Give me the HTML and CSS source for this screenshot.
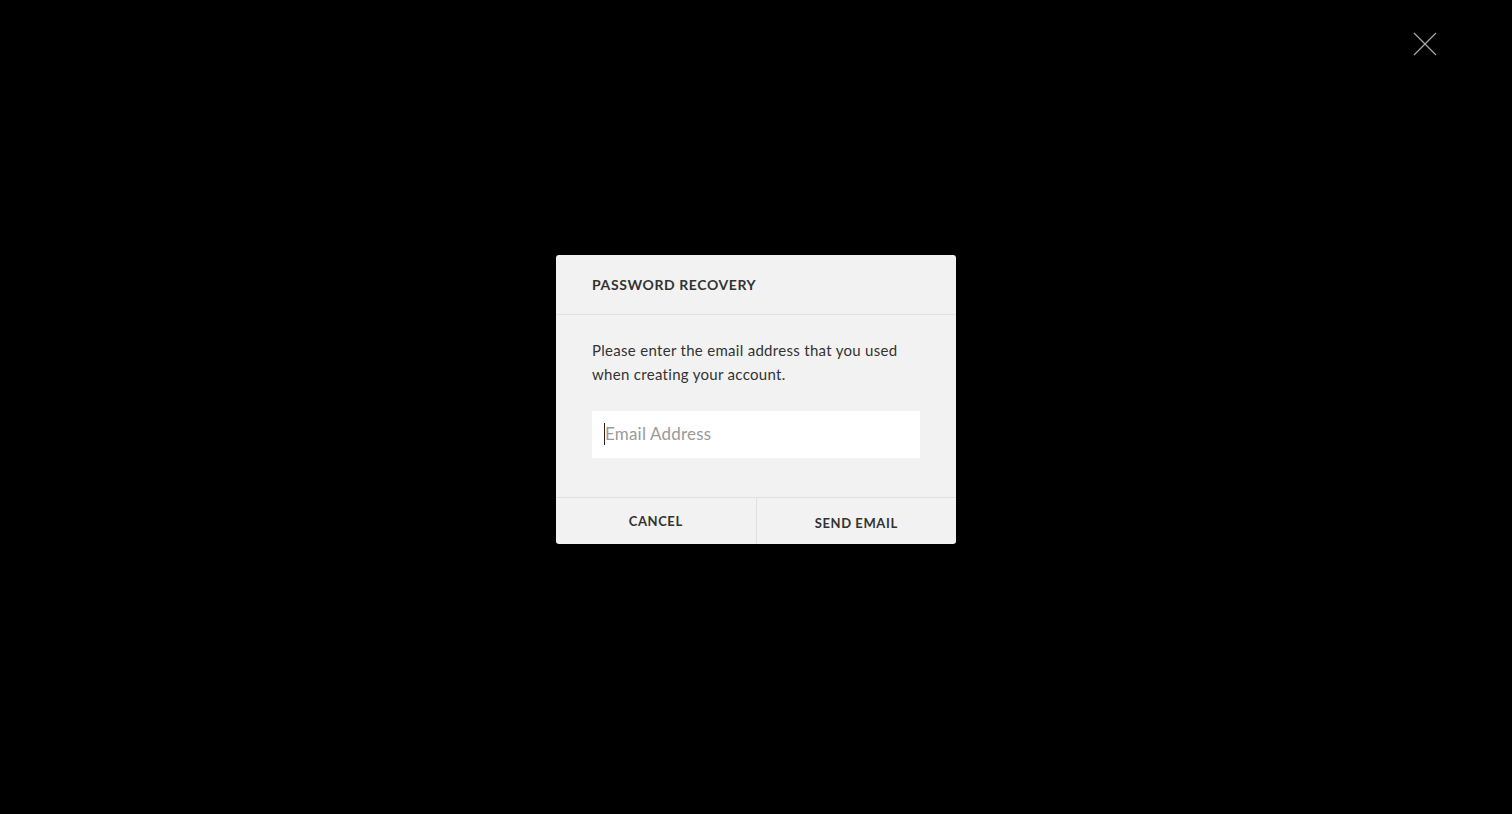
FILE: index.html
```html
<!DOCTYPE html>
<html>
<head>
<meta charset="utf-8">
<link rel="stylesheet" href="styles.css">
</head>
<body>
<div class="overlay">
  <button class="close" aria-label="Close">
    <svg width="24" height="24" viewBox="0 0 24 24"><path d="M1 1 L23 23 M23 1 L1 23" stroke="#a8a8a8" stroke-width="1.2" fill="none"/></svg>
  </button>
  <div class="modal">
    <div class="modal-header">PASSWORD RECOVERY</div>
    <div class="modal-body">
      <p class="desc">Please enter the email address that you used when creating your account.</p>
      <div class="field"><span class="caret"></span><span class="placeholder">Email Address</span></div>
    </div>
    <div class="modal-footer">
      <button class="btn btn-cancel">CANCEL</button>
      <button class="btn btn-send">SEND EMAIL</button>
    </div>
  </div>
</div>
</body>
</html>
```
FILE: styles.css
```css
html, body {
  margin: 0;
  padding: 0;
  background: #000;
  height: 100%;
}
body {
  font-family: "Lato", "Open Sans", sans-serif;
  color: #333;
}
.overlay {
  position: relative;
  height: 814px;
  display: flex;
  align-items: flex-start;
  justify-content: center;
}
.close {
  position: absolute;
  top: 32px;
  left: 1413px;
  width: 24px;
  height: 24px;
  padding: 0;
  border: 0;
  background: none;
}
.close svg { display: block; }
.modal {
  margin-top: 255px;
  width: 400px;
  background: #f2f2f2;
  border-radius: 3px;
  overflow: hidden;
}
.modal-header {
  height: 59px;
  border-bottom: 1px solid #e2e2e2;
  padding: 0 36px;
  display: flex;
  align-items: center;
  font-size: 14px;
  font-weight: 700;
  letter-spacing: 0.6px;
  color: #333;
}
.modal-body {
  padding: 23px 36px 39px;
}
.desc {
  margin: 0;
  font-size: 15px;
  line-height: 24px;
  letter-spacing: 0.3px;
  color: #333;
}
.field {
  margin-top: 25px;
  height: 47px;
  width: 328px;
  background: #fff;
  display: flex;
  align-items: center;
  padding-left: 12px;
  box-sizing: border-box;
}
.caret {
  width: 1px;
  height: 22px;
  background: #222;
  margin-top: -1px;
}
.placeholder {
  font-size: 17px;
  color: #9a9a9a;
  letter-spacing: 0.2px;
  margin-top: -2px;
}
.modal-footer {
  display: flex;
  border-top: 1px solid #e0e0e0;
  height: 46px;
}
.btn {
  flex: 1;
  border: 0;
  background: none;
  font-family: inherit;
  font-size: 13px;
  font-weight: 700;
  letter-spacing: 0.6px;
  color: #333;
  padding: 0;
}
.btn-cancel {
  border-right: 1px solid #e0e0e0;
  padding-top: 0;
}
.btn-send {
  padding-top: 4px;
}
```
